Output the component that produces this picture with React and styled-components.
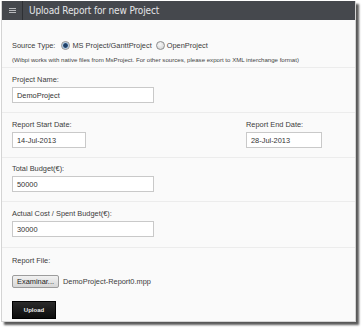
import React from "react"
import styled, { createGlobalStyle } from "styled-components"

const GlobalStyle = createGlobalStyle`
  html, body {
    margin: 0;
    padding: 0;
    background: #ffffff;
  }
  body {
    font-family: "Liberation Sans", Arial, sans-serif;
    color: #333;
  }
`

const Page = styled.div`
  width: 364px;
  height: 330px;
  padding: 1px 0 0 1px;
  box-sizing: border-box;
`

const Panel = styled.div`
  width: 355px;
  height: 321px;
  box-sizing: border-box;
  background: #fafafa;
  border: 1px solid #d4d4d4;
  border-top: none;
  box-shadow: 3px 3px 2px rgba(0, 0, 0, 0.65);
  display: flex;
  flex-direction: column;
`

const Header = styled.div`
  height: 19px;
  background: #45484d;
  display: flex;
  align-items: stretch;
  flex-shrink: 0;
`

const MenuCell = styled.div`
  width: 20px;
  border-right: 1px solid #2e3034;
  display: flex;
  flex-direction: column;
  justify-content: center;
  align-items: center;
  gap: 1px;
  span {
    display: block;
    width: 7px;
    height: 1px;
    background: #b8babd;
  }
`

const Title = styled.div`
  padding-left: 6px;
  display: flex;
  align-items: center;
  color: #e4e5e7;
  font-family: "Liberation Sans Narrow", "DejaVu Sans Condensed", "Liberation Sans", sans-serif;
  font-size: 10px;
  letter-spacing: -0.15px;
`

const Section = styled.div`
  padding: ${(p) => p.$pad || "8px 10px 10px"};
  border-bottom: ${(p) => (p.$last ? "none" : "1px solid #ececec")};
  display: flex;
  flex-direction: ${(p) => (p.$row ? "row" : "column")};
  gap: ${(p) => p.$gap || "3px"};
`

const Field = styled.div`
  display: flex;
  flex-direction: column;
  gap: 3px;
  margin-left: ${(p) => p.$push || "0"};
`

const Label = styled.div`
  font-size: 7.4px;
  line-height: 8px;
  color: #3a3a3a;
`

const Input = styled.div`
  width: ${(p) => p.$w}px;
  height: 16px;
  box-sizing: border-box;
  background: #fff;
  border: 1px solid #c9c9c9;
  padding-left: 4px;
  display: flex;
  align-items: center;
  font-size: 7.4px;
  color: #333;
`

const SourceRow = styled.div`
  display: flex;
  align-items: center;
  font-size: 7.4px;
  color: #3a3a3a;
  margin-top: 11px;
`

const RadioLabel = styled.span`
  display: inline-flex;
  align-items: center;
  gap: 2px;
  margin-left: ${(p) => p.$ml || "0"};
`

const Radio = styled.span`
  width: 9px;
  height: 9px;
  border-radius: 50%;
  box-sizing: border-box;
  border: 1px solid #8d8d8d;
  background: ${(p) =>
    p.$on
      ? "radial-gradient(circle, #1f3f66 0 1.9px, #7fa6cc 2.5px, #e6eef6 3.5px)"
      : "radial-gradient(circle at 40% 35%, #f8f8f8 0, #cfcfcf 100%)"};
`

const Note = styled.div`
  font-size: 6.1px;
  line-height: 7px;
  color: #444;
  margin-top: 6px;
  white-space: nowrap;
`

const FileRow = styled.div`
  display: flex;
  align-items: center;
  gap: 4px;
  margin-top: 10px;
  font-size: 7.4px;
  color: #3a3a3a;
`

const BrowseButton = styled.div`
  width: 47px;
  height: 13px;
  box-sizing: border-box;
  border: 1px solid #9c9c9c;
  border-radius: 2px;
  background: linear-gradient(#f2f2f2, #d6d6d6);
  display: flex;
  align-items: center;
  justify-content: center;
  font-size: 7.4px;
  color: #222;
`

const UploadButton = styled.div`
  width: 44px;
  height: 18px;
  margin-top: 13px;
  box-sizing: border-box;
  background: linear-gradient(#2b2b2b, #0c0c0c);
  border: 1px solid #000;
  display: flex;
  align-items: center;
  justify-content: center;
  color: #f0f0f0;
  font-size: 6px;
  font-weight: bold;
`

const App = () => {
  return (
    <Page>
      <GlobalStyle />
      <Panel>
        <Header>
          <MenuCell>
            <span />
            <span />
            <span />
          </MenuCell>
          <Title>Upload Report for new Project</Title>
        </Header>

        <Section $pad="10px 10px 4px" $gap="0">
          <SourceRow>
            Source Type:
            <RadioLabel $ml="6px">
              <Radio $on />
              MS Project/GanttProject
            </RadioLabel>
            <RadioLabel $ml="4px">
              <Radio />
              OpenProject
            </RadioLabel>
          </SourceRow>
          <Note>
            (Wibpi works with native files from MsProject. For other sources, please export to XML interchange format)
          </Note>
        </Section>

        <Section $pad="8px 10px 9px">
          <Field>
            <Label>Project Name:</Label>
            <Input $w={142}>DemoProject</Input>
          </Field>
        </Section>

        <Section $row $gap="0" $pad="8px 10px 9px">
          <Field>
            <Label>Report Start Date:</Label>
            <Input $w={74}>14-Jul-2013</Input>
          </Field>
          <Field $push="160px">
            <Label>Report End Date:</Label>
            <Input $w={76}>28-Jul-2013</Input>
          </Field>
        </Section>

        <Section $pad="7px 10px 9px">
          <Field>
            <Label>Total Budget(€):</Label>
            <Input $w={142}>50000</Input>
          </Field>
        </Section>

        <Section $pad="8px 10px 10px">
          <Field>
            <Label>Actual Cost / Spent Budget(€):</Label>
            <Input $w={142}>30000</Input>
          </Field>
        </Section>

        <Section $last $pad="9px 10px 0" $gap="0">
          <Label>Report File:</Label>
          <FileRow>
            <BrowseButton>Examinar...</BrowseButton>
            DemoProject-Report0.mpp
          </FileRow>
          <UploadButton>Upload</UploadButton>
        </Section>
      </Panel>
    </Page>
  )
}

export default App
